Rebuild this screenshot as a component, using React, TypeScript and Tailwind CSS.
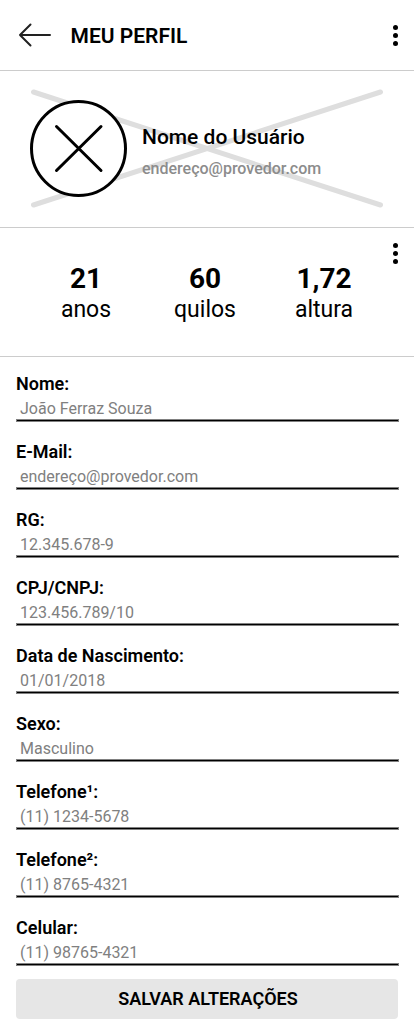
const stats = [
  { value: "21", label: "anos" },
  { value: "60", label: "quilos" },
  { value: "1,72", label: "altura" },
];

const fields = [
  { label: "Nome:", value: "João Ferraz Souza" },
  { label: "E-Mail:", value: "endereço@provedor.com" },
  { label: "RG:", value: "12.345.678-9" },
  { label: "CPJ/CNPJ:", value: "123.456.789/10" },
  { label: "Data de Nascimento:", value: "01/01/2018" },
  { label: "Sexo:", value: "Masculino" },
  { label: "Telefone¹:", value: "(11) 1234-5678" },
  { label: "Telefone²:", value: "(11) 8765-4321" },
  { label: "Celular:", value: "(11) 98765-4321" },
];

function MoreIcon() {
  return (
    <svg width="5" height="21" viewBox="0 0 5 21" aria-hidden="true">
      <circle cx="2.5" cy="2.5" r="2.5" />
      <circle cx="2.5" cy="10.5" r="2.5" />
      <circle cx="2.5" cy="18.5" r="2.5" />
    </svg>
  );
}

export default function App() {
  return (
    <main className="flex h-[1035px] w-[414px] flex-col bg-white font-['Roboto',sans-serif] text-black">
      <header className="flex h-[71px] shrink-0 items-center border-b border-[#cccccc] pr-4 pl-[18px]">
        <button aria-label="Voltar">
          <svg width="34" height="26" viewBox="0 0 34 26" fill="none" stroke="#222" strokeWidth="2" strokeLinecap="round" strokeLinejoin="round">
            <path d="M32 13H2M12.5 2.5L2 13L12.5 23.5" />
          </svg>
        </button>
        <h1 className="ml-[18.5px] flex-1 pt-[3px] text-[21px] font-semibold">MEU PERFIL</h1>
        <button className="pt-px" aria-label="Mais opções"><MoreIcon /></button>
      </header>

      <section className="relative flex h-[157px] shrink-0 items-start border-b border-[#cccccc] pt-[29px] pl-[30px]">
        <svg className="absolute inset-0" width="414" height="156" viewBox="0 0 414 156" stroke="#dedede" strokeWidth="5" strokeLinecap="round">
          <path d="M33.5 21L380.5 134M33.5 134L380.5 21" />
        </svg>
        <svg className="relative" width="97" height="97" viewBox="0 0 97 97" fill="white" stroke="black" strokeWidth="3" strokeLinecap="round">
          <circle cx="48.5" cy="48.5" r="47" />
          <path d="M26.5 26.5L71 70.5M71 26.5L26.5 70.5" />
        </svg>
        <div className="relative ml-[15px] pt-[21px]">
          <h2 className="text-[21px] leading-8 font-medium">Nome do Usuário</h2>
          <p className="text-[16px] leading-8 font-medium text-[#8c8c8c]">endereço@provedor.com</p>
        </div>
      </section>

      <section className="flex h-[129px] shrink-0 border-b border-[#cccccc] pr-4 pl-[26.5px]">
        <div className="grid w-[357px] grid-cols-3 pt-[35px] text-center">
          {stats.map((stat) => (
            <div key={stat.label}>
              <p className="text-[28px] leading-8 font-bold">{stat.value}</p>
              <p className="text-[23px] leading-[30px]">{stat.label}</p>
            </div>
          ))}
        </div>
        <button className="mt-[15px] ml-auto h-[21px]" aria-label="Mais opções"><MoreIcon /></button>
      </section>

      <form className="flex flex-col px-4 pt-[14px]">
        {fields.map((field) => (
          <div key={field.label} className="h-[68px]">
            <p className="h-[26px] text-[18px] leading-[26px] font-semibold">{field.label}</p>
            <p className="h-[22px] pl-1 text-[16px] leading-6 text-[#808080]">{field.value}</p>
            <div className="h-[3px] translate-x-[0.5px] border-y border-[#808080] bg-black" />
          </div>
        ))}
        <button type="button" className="-mt-[4px] h-10 rounded-[4px] bg-[#e6e6e6] pb-0.5 pl-[2px] text-[18px] font-semibold">SALVAR ALTERAÇÕES</button>
      </form>
    </main>
  );
}
